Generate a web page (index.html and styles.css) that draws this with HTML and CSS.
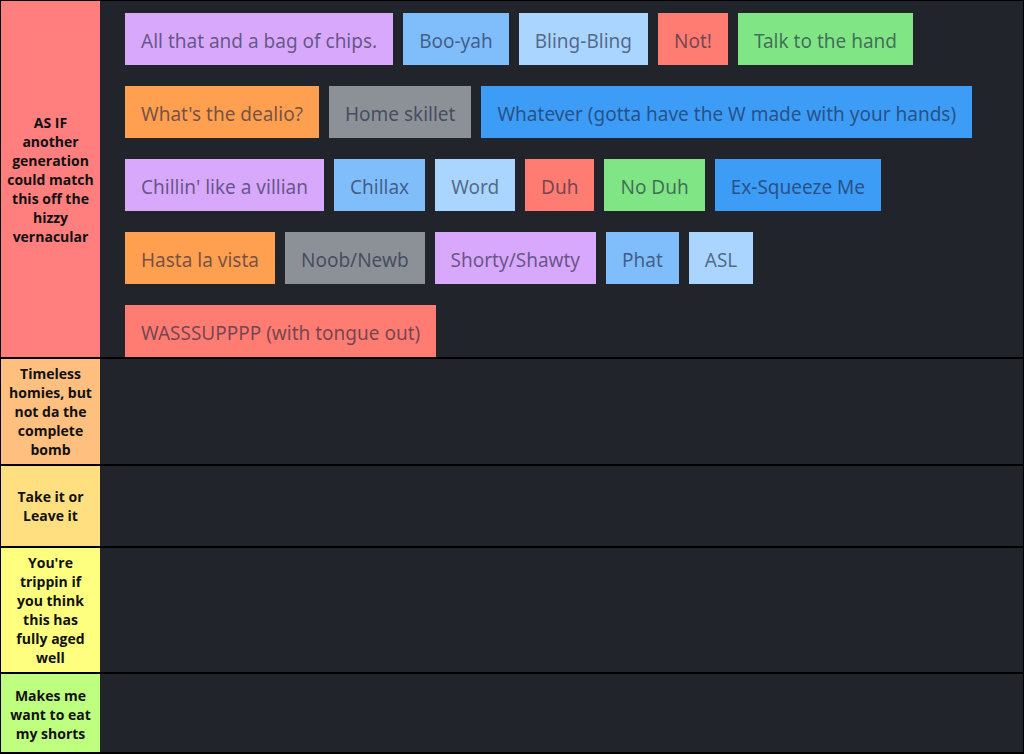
FILE: index.html
```html
<!DOCTYPE html>
<html>
<head>
<meta charset="utf-8">
<link rel="stylesheet" href="styles.css">
</head>
<body>
<div class="tierlist">
  <div class="tier">
    <div class="label t-s">AS IF another generation could match this off the hizzy vernacular</div>
    <div class="items">
      <span class="chip purple">All that and a bag of chips.</span>
      <span class="chip sky">Boo-yah</span>
      <span class="chip pale">Bling-Bling</span>
      <span class="chip red">Not!</span>
      <span class="chip green">Talk to the hand</span>
      <span class="chip orange">What's the dealio?</span>
      <span class="chip gray">Home skillet</span>
      <span class="chip blue">Whatever (gotta have the W made with your hands)</span>
      <span class="chip purple">Chillin' like a villian</span>
      <span class="chip sky">Chillax</span>
      <span class="chip pale">Word</span>
      <span class="chip red">Duh</span>
      <span class="chip green">No Duh</span>
      <span class="chip blue">Ex-Squeeze Me</span>
      <span class="chip orange">Hasta la vista</span>
      <span class="chip gray">Noob/Newb</span>
      <span class="chip purple">Shorty/Shawty</span>
      <span class="chip sky">Phat</span>
      <span class="chip pale">ASL</span>
      <span class="chip red">WASSSUPPPP (with tongue out)</span>
    </div>
  </div>
  <div class="tier">
    <div class="label t-a">Timeless homies, but not da the complete bomb</div>
    <div class="items"></div>
  </div>
  <div class="tier">
    <div class="label t-b">Take it or Leave it</div>
    <div class="items"></div>
  </div>
  <div class="tier">
    <div class="label t-c">You're trippin if you think this has fully aged well</div>
    <div class="items"></div>
  </div>
  <div class="tier last">
    <div class="label t-d">Makes me want to eat my shorts</div>
    <div class="items"></div>
  </div>
</div>
</body>
</html>
```
FILE: styles.css
```css
html, body {
  margin: 0;
  padding: 0;
  background: #000;
}
.tierlist {
  width: 1024px;
  height: 754px;
  box-sizing: border-box;
  border: 1px solid #000;
  border-bottom-width: 2px;
  background: #000;
  display: flex;
  flex-direction: column;
  gap: 2px;
  overflow: hidden;
}
.tier {
  display: grid;
  grid-template-columns: 99px 1fr;
  min-height: 80px;
  background: #22242c;
  flex: 0 0 auto;
}
.tier.last {
  flex: 1 0 auto;
}
.label {
  display: flex;
  align-items: center;
  justify-content: center;
  text-align: center;
  padding: 5px 6px;
  font-family: "Open Sans", "Noto Sans", sans-serif;
  font-weight: 700;
  font-size: 14px;
  line-height: 19px;
  color: #111;
}
.t-s { background: #ff7f7f; }
.t-a { background: #ffbf7f; }
.t-b { background: #ffdf7f; }
.t-c { background: #ffff7f; }
.t-d { background: #bfff7f; }
.items {
  display: flex;
  flex-wrap: wrap;
  align-content: flex-start;
  column-gap: 10px;
  row-gap: 21px;
  padding: 12px 24px 0 25px;
}
.chip {
  display: block;
  height: 50px;
  padding: 2px 16px 0;
  line-height: 52px;
  font-family: "Noto Sans", sans-serif;
  font-size: 19px;
  color: rgba(25, 30, 60, 0.62);
  white-space: nowrap;
  overflow: hidden;
}
.purple { background: #d8a8fc; }
.sky { background: #7fbdfb; }
.pale { background: #a9d5ff; }
.red { background: #ff7c72; }
.green { background: #80e584; }
.orange { background: #ff9f50; }
.gray { background: #8c9097; }
.blue { background: #3c9cf6; }
```
